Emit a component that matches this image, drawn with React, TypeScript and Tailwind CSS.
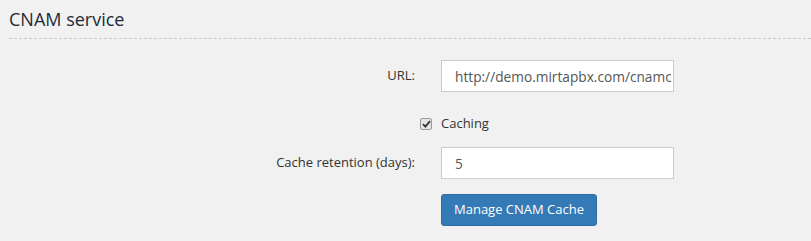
import React, { useState } from "react";

const font = { fontFamily: '"Open Sans", "Liberation Sans", sans-serif' };

const App = () => {
  const [url, setUrl] = useState("http://demo.mirtapbx.com/cnamcache");
  const [caching, setCaching] = useState(true);
  const [retention, setRetention] = useState("5");

  return (
    <div className="min-h-screen w-full bg-[#f1f1f1] text-[#333]" style={font}>
      <div className="pl-[9px]">
        <h3 className="pt-[7px] pb-[6px] text-[18px] leading-[25px] font-normal text-[#1f2a38] border-b border-dashed border-[#c8c8c8]">
          CNAM service
        </h3>

        <div className="mt-[21px] flex items-center">
          <label className="w-[406px] text-right text-[13px] text-[#333]">URL:</label>
          <input
            className="ml-[26px] w-[233px] h-[32px] border border-[#ccc] bg-white pl-[13px] pr-[2px] text-[13.7px] text-[#555] outline-none"
            value={url}
            onChange={(e) => setUrl(e.target.value)}
          />
        </div>

        <div className="mt-[22px] flex items-center h-[20px]">
          <div className="w-[406px]" />
          <label
            className="ml-[5px] flex items-center gap-[9px] text-[13px] text-[#333] cursor-pointer"
            onClick={() => setCaching(!caching)}
          >
            <span className="w-[12px] h-[12px] rounded-[2px] border border-[#9a9a9a] bg-[#e4e4e4] flex items-center justify-center">
              {caching && (
                <svg width="9" height="8" viewBox="0 0 9 8">
                  <path d="M1 4.2 L3.4 6.6 L8 1.2" fill="none" stroke="#333" strokeWidth="1.8" />
                </svg>
              )}
            </span>
            Caching
          </label>
        </div>

        <div className="mt-[13px] flex items-center">
          <label className="w-[406px] text-right text-[13px] text-[#333]">
            Cache retention (days):
          </label>
          <input
            className="ml-[26px] w-[233px] h-[32px] border border-[#ccc] bg-white pl-[13px] pr-[2px] text-[13.7px] text-[#555] outline-none"
            value={retention}
            onChange={(e) => setRetention(e.target.value)}
          />
        </div>

        <div className="mt-[15px] flex">
          <div className="w-[406px]" />
          <button className="ml-[26px] h-[32px] px-[12px] rounded-[3px] border border-[#2e6da4] bg-[#337ab7] text-white text-[13px]">
            Manage CNAM Cache
          </button>
        </div>
      </div>
    </div>
  );
};

export default App;
